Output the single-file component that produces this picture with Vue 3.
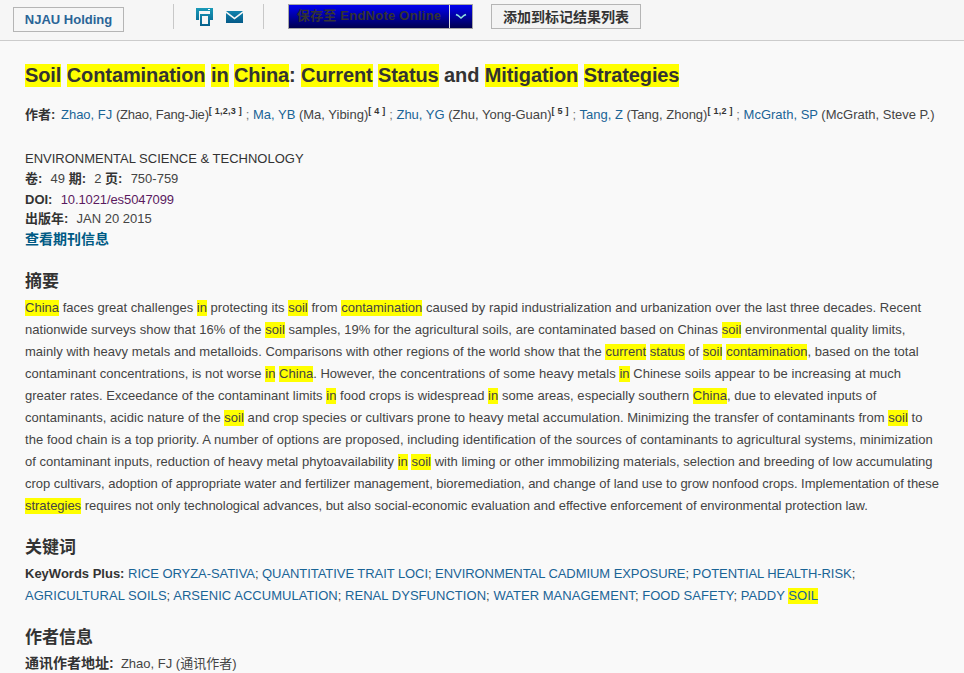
<template>
  <div class="page">
    <header class="toolbar">
      <a class="holding">NJAU Holding</a>
      <span class="sep sep-a"></span>
      <svg class="icon print" width="17" height="18" viewBox="0 0 17 18">
        <defs><linearGradient id="pg" x1="0" y1="0" x2="0" y2="1"><stop offset="0" stop-color="#1a9ab8"/><stop offset="1" stop-color="#05608c"/></linearGradient></defs>
        <path fill="url(#pg)" fill-rule="evenodd" d="M0 0h17v12h-3V3H3v9H0zM4 6h10v12H4zM6 8v8h6V8z"/>
        <rect x="12" y="1" width="2" height="1" fill="#fff"/>
      </svg>
      <svg class="icon mail" width="17" height="12" viewBox="0 0 17 12">
        <defs><linearGradient id="mg" x1="0" y1="0" x2="0" y2="1"><stop offset="0" stop-color="#1283ad"/><stop offset="1" stop-color="#045a88"/></linearGradient></defs>
        <path fill="url(#mg)" d="M0 0h17L8.500 6.500zM0 2l8.500 6.500L17 2v10H0z"/>
      </svg>
      <span class="sep sep-b"></span>
      <div class="endnote">
        <span class="en-label">保存至 EndNote Online</span>
        <span class="en-arrow">
          <svg width="12" height="7" viewBox="0 0 12 7"><path d="M1 1.500l2 1L6 5l3-2.500 2-1" fill="none" stroke="#8fe0e0" stroke-width="1.500"/></svg>
        </span>
      </div>
      <button class="mark-btn">添加到标记结果列表</button>
    </header>

    <main class="record">
      <h1 class="title"><mark>Soil</mark> <mark>Contamination</mark> <mark>in</mark> <mark>China</mark>: <mark>Current</mark> <mark>Status</mark> and <mark>Mitigation</mark> <mark>Strategies</mark></h1>

      <p class="authors">
        <b class="au-label">作者:</b> <a>Zhao, FJ</a> <span class="first-name">(Zhao, Fang-Jie)</span><sup>[ 1,2,3 ]</sup> <i>;</i> <a>Ma, YB</a> (Ma, Yibing)<sup>[ 4 ]</sup> <i>;</i> <a>Zhu, YG</a> (Zhu, Yong-Guan)<sup>[ 5 ]</sup> <i>;</i> <a>Tang, Z</a> (Tang, Zhong)<sup>[ 1,2 ]</sup> <i>;</i> <a>McGrath, SP</a> (McGrath, Steve P.)
      </p>

      <div class="source">
        <div class="journal">ENVIRONMENTAL SCIENCE &amp; TECHNOLOGY</div>
        <div class="row"><b>卷:</b>&nbsp; 49 <b>期:</b>&nbsp; 2 <b>页:</b>&nbsp; 750-759</div>
        <div class="row doi-row"><b>DOI:</b>&nbsp; <span class="doi">10.1021/es5047099</span></div>
        <div class="row"><b>出版年:</b>&nbsp; JAN 20 2015</div>
        <a class="journal-link">查看期刊信息</a>
      </div>

      <h2 class="heading abs-head">摘要</h2>
      <p class="abstract">
        <span v-for="(line, i) in abstractLines" :key="i" class="abs-line" :style="{ letterSpacing: line.spacing + 'px' }"><template v-for="(part, j) in line.parts" :key="j"><mark v-if="part.hit">{{ part.text }}</mark><template v-else>{{ part.text }}</template></template></span>
      </p>

      <h2 class="heading kw-head">关键词</h2>
      <p class="keywords"><b>KeyWords Plus:</b> <span class="kw-tight"><a>RICE ORYZA-SATIVA</a>; <a>QUANTITATIVE TRAIT LOCI</a>; <a>ENVIRONMENTAL CADMIUM EXPOSURE</a>; <a>POTENTIAL HEALTH-RISK</a>;</span><br><span class="kw-wide"><a>AGRICULTURAL SOILS</a>; <a>ARSENIC ACCUMULATION</a>; <a>RENAL DYSFUNCTION</a>; <a>WATER MANAGEMENT</a>; <a>FOOD SAFETY</a>; <a>PADDY <mark>SOIL</mark></a></span></p>

      <h2 class="heading au-head">作者信息</h2>
      <div class="row"><b class="addr">通讯作者地址:</b>&nbsp; Zhao, FJ (通讯作者)</div>
    </main>
  </div>
</template>

<script setup>
const raw = [
  ['*China* faces great challenges *in* protecting its *soil* from *contamination* caused by rapid industrialization and urbanization over the last three decades. Recent', 3],
  ['nationwide surveys show that 16% of the *soil* samples, 19% for the agricultural soils, are contaminated based on Chinas *soil* environmental quality limits,', 4],
  ['mainly with heavy metals and metalloids. Comparisons with other regions of the world show that the *current* *status* of *soil* *contamination*, based on the total', 5],
  ['contaminant concentrations, is not worse *in* *China*. However, the concentrations of some heavy metals *in* Chinese soils appear to be increasing at much', 4],
  ['greater rates. Exceedance of the contaminant limits *in* food crops is widespread *in* some areas, especially southern *China*, due to elevated inputs of', 4],
  ['contaminants, acidic nature of the *soil* and crop species or cultivars prone to heavy metal accumulation. Minimizing the transfer of contaminants from *soil* to', 6],
  ['the food chain is a top priority. A number of options are proposed, including identification of the sources of contaminants to agricultural systems, minimization', 9],
  ['of contaminant inputs, reduction of heavy metal phytoavailability *in* *soil* with liming or other immobilizing materials, selection and breeding of low accumulating', 3],
  ['crop cultivars, adoption of appropriate water and fertilizer management, bioremediation, and change of land use to grow nonfood crops. Implementation of these', -6],
  ['*strategies* requires not only technological advances, but also social-economic evaluation and effective enforcement of environmental protection law.', -4]
]

const abstractLines = raw.map(([text, diff]) => ({
  spacing: (diff / text.length).toFixed(3),
  parts: text.split(/(\*[^*]+\*)/).filter(Boolean).map((p) =>
    p.startsWith('*') ? { text: p.slice(1, -1), hit: true } : { text: p, hit: false }
  )
}))
</script>

<style>
html, body { margin: 0; background: #f9f9f9; }
</style>

<style scoped>
.page {
  width: 964px;
  height: 673px;
  overflow: hidden;
  background: #f9f9f9;
  color: #444;
  font: 13px/22px "Liberation Sans", "Noto Sans CJK SC", sans-serif;
}
b { color: #333; }
.toolbar {
  height: 40px;
  display: flex;
  align-items: flex-start;
  background: #f6f6f6;
  border-bottom: 1px solid #ccc;
}
.holding {
  margin: 7px 0 0 13px;
  width: 109px;
  height: 23px;
  border: 1px solid #b5b5b5;
  text-align: center;
  font-weight: bold;
  line-height: 23px;
  color: #2a6496;
}
.sep { width: 1px; height: 25px; margin-top: 4px; background: #c8c8c8; }
.sep-a { margin-left: 49px; }
.icon { flex: none; }
.print { margin: 8px 0 0 22px; }
.mail { margin: 11px 0 0 13px; }
.sep-b { margin-left: 20px; }
.endnote {
  display: flex;
  margin: 4px 0 0 24px;
  width: 185px;
  height: 25px;
  box-sizing: border-box;
  border: 1px solid #a6a6a6;
  background: linear-gradient(#0000f0, #000050);
}
.en-label {
  width: 160px;
  text-align: center;
  font-weight: bold;
  line-height: 22px;
  color: #333;
  letter-spacing: 0.25px;
  white-space: nowrap;
}
.en-arrow {
  flex: 1;
  border-left: 1px solid #ddd;
  display: flex;
  align-items: center;
  justify-content: center;
}
.mark-btn {
  margin: 4px 0 0 18px;
  width: 150px;
  height: 25px;
  padding: 0;
  border: 1px solid #b5b5b5;
  background: #f3f3f3;
  color: #333;
  font: bold 14px/20px "Liberation Sans", "Noto Sans CJK SC", sans-serif;
  border-radius: 0;
}
.record { padding: 0 25px; }
.title {
  margin: 0;
  padding-top: 19px;
  font-size: 20px;
  line-height: 30px;
  font-weight: bold;
  letter-spacing: -0.1px;
  color: #333;
}
mark { background: #ff0; color: inherit; padding-bottom: 1px; }
.authors {
  margin: 14px 0 0;
  white-space: nowrap;
  line-height: 22px;
}
.au-label { margin-right: 2px; }
.first-name { letter-spacing: -0.2px; }
.authors a, .keywords a { color: #1a6496; }
.authors i { font-style: normal; color: #777; }
sup {
  font-size: 9px;
  font-weight: bold;
  line-height: 0;
  vertical-align: 5px;
  letter-spacing: 0.25px;
  color: #333;
}
.source { margin-top: 23px; line-height: 20px; }
.source b { margin-right: 1px; }
.journal { color: #333; }
.row { line-height: 20px; }
.doi-row { position: relative; top: 1px; }
.doi { color: #5b1a5f; letter-spacing: -0.1px; }
.journal-link { display: block; font-size: 14px; font-weight: bold; color: #005a84; }
.heading {
  margin: 0;
  font-size: 17px;
  font-weight: bold;
  line-height: 24px;
  color: #333;
}
.abs-head { margin-top: 21px; }
.abstract { margin: 3px 0 0; white-space: nowrap; line-height: 22px; }
.abs-line { display: block; }
.kw-head { margin-top: 19px; }
.keywords { margin: 3px 0 0; white-space: nowrap; line-height: 22px; }
.kw-tight { letter-spacing: -0.06px; }
.kw-wide { letter-spacing: 0.04px; }
.au-head { margin-top: 19px; }
.au-head + .row { margin-top: 2px; line-height: 22px; }
.addr { font-size: 14px; }
</style>
